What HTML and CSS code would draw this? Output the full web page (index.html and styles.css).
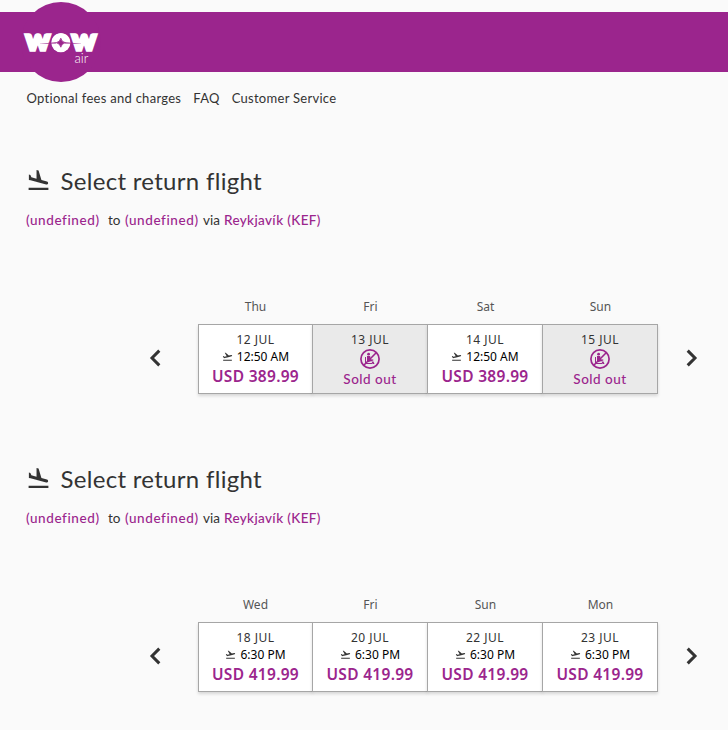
FILE: index.html
```html
<!DOCTYPE html>
<html lang="en">
<head>
<meta charset="utf-8">
<title>WOW air</title>
<link rel="stylesheet" href="styles.css">
</head>
<body>
<svg width="0" height="0" class="defs">
  <symbol id="landing" viewBox="0 0 24 24"><path d="M2.5 19h19v2h-19zM9.68 13.27l4.35 1.16 5.31 1.42c.8.21 1.62-.26 1.84-1.06.21-.8-.26-1.62-1.06-1.84l-5.31-1.42-2.76-9.02L10.12 2v8.28L5.15 8.95l-.93-2.32-1.45-.39v5.17l1.6.43 5.31 1.43z"/></symbol>
  <symbol id="takeoff" viewBox="0 0 24 24"><path d="M2.5 19h19v2h-19zM22.07 9.64c-.21-.8-1.04-1.28-1.84-1.06L14.92 10l-6.9-6.43-1.93.51 4.14 7.17-4.97 1.33-1.97-1.54-1.45.39 1.82 3.16.77 1.33 1.6-.43 5.31-1.42 4.35-1.16L21 11.49c.81-.23 1.28-1.05 1.07-1.85z"/></symbol>
  <symbol id="soldout" viewBox="0 0 20 20"><g fill="none" stroke="currentColor"><circle cx="10" cy="10" r="9.100" stroke-width="1.700"/><path d="M16.2 3.8 3.8 16.2" stroke-width="1.6"/></g><circle cx="8.6" cy="5.2" r="1.4"/><path d="M7 7h3.2l.3 3.2 2.800.300v1L8 13.200 7 12zM5 8h1v6h6v1H5zM11.500 12.500h2l1 2.500h-2z"/></symbol>
  <symbol id="prev" viewBox="0 0 12 18"><path d="M10.300 1.600 3 9l7.300 7.400" fill="none" stroke="currentColor" stroke-width="3"/></symbol>
  <symbol id="next" viewBox="0 0 12 18"><path d="M1.700 1.600 9 9l-7.300 7.400" fill="none" stroke="currentColor" stroke-width="3"/></symbol>
</svg>
<header class="bar">
  <svg class="logo" viewBox="0 0 80 80" width="80" height="80">
    <circle cx="40" cy="40" r="40" fill="#9b258d"/>
    <text class="wow" x="5" y="48.200" textLength="23.500" lengthAdjust="spacingAndGlyphs">W</text>
    <text class="wow" x="32" y="48.200" textLength="16" lengthAdjust="spacingAndGlyphs">O</text>
    <text class="wow" x="51.300" y="48.200" textLength="23.500" lengthAdjust="spacingAndGlyphs">W</text>
    <circle cx="39.800" cy="40.700" r="9.500" fill="#fff"/>
    <path d="M39.800 36.200Q40.600 39.900 44.300 40.700 40.600 41.500 39.800 45.200 39 41.500 35.300 40.700 39 39.900 39.800 36.200z" fill="#9b258d" stroke="#9b258d" stroke-width=".8"/>
    <path d="M17 41.800 35 40.300v1.200zM44 40.300l18.500 1.500-18.500-.3z" fill="#9b258d"/>
    <text class="air" x="53.500" y="61">air</text>
  </svg>
</header>
<nav class="links"><a>Optional fees and charges</a><a>FAQ</a><a>Customer Service</a></nav>
<section class="flight">
  <h2><svg class="land"><use href="#landing"/></svg><span>Select return flight</span></h2>
  <p class="route"><b>(undefined)</b><span class="to">to</span><b>(undefined)</b><span class="via">via</span><b class="city">Reykjavík (KEF)</b></p>
  <div class="picker">
    <svg class="arrow"><use href="#prev"/></svg>
    <div class="days">
      <div class="day"><div class="name">Thu</div><div class="card"><span class="date">12 JUL</span><span class="time"><svg><use href="#takeoff"/></svg>12:50 AM</span><span class="price">USD 389.99</span></div></div>
      <div class="day"><div class="name">Fri</div><div class="card sold"><span class="date">13 JUL</span><svg class="no"><use href="#soldout"/></svg><span class="out">Sold out</span></div></div>
      <div class="day"><div class="name">Sat</div><div class="card"><span class="date">14 JUL</span><span class="time"><svg><use href="#takeoff"/></svg>12:50 AM</span><span class="price">USD 389.99</span></div></div>
      <div class="day"><div class="name">Sun</div><div class="card sold"><span class="date">15 JUL</span><svg class="no"><use href="#soldout"/></svg><span class="out">Sold out</span></div></div>
    </div>
    <svg class="arrow"><use href="#next"/></svg>
  </div>
</section>
<section class="flight">
  <h2><svg class="land"><use href="#landing"/></svg><span>Select return flight</span></h2>
  <p class="route"><b>(undefined)</b><span class="to">to</span><b>(undefined)</b><span class="via">via</span><b class="city">Reykjavík (KEF)</b></p>
  <div class="picker">
    <svg class="arrow"><use href="#prev"/></svg>
    <div class="days">
      <div class="day"><div class="name">Wed</div><div class="card"><span class="date">18 JUL</span><span class="time"><svg><use href="#takeoff"/></svg>6:30 PM</span><span class="price">USD 419.99</span></div></div>
      <div class="day"><div class="name">Fri</div><div class="card"><span class="date">20 JUL</span><span class="time"><svg><use href="#takeoff"/></svg>6:30 PM</span><span class="price">USD 419.99</span></div></div>
      <div class="day"><div class="name">Sun</div><div class="card"><span class="date">22 JUL</span><span class="time"><svg><use href="#takeoff"/></svg>6:30 PM</span><span class="price">USD 419.99</span></div></div>
      <div class="day"><div class="name">Mon</div><div class="card"><span class="date">23 JUL</span><span class="time"><svg><use href="#takeoff"/></svg>6:30 PM</span><span class="price">USD 419.99</span></div></div>
    </div>
    <svg class="arrow"><use href="#next"/></svg>
  </div>
</section>
</body>
</html>
```
FILE: styles.css
```css
* { box-sizing: border-box; }
html { overflow: hidden; }
body { margin: 0; padding-top: 12px; height: 730px; background: #fafafa; color: #333; font-family: Lato, "Open Sans", sans-serif; overflow: hidden; }
.defs { position: absolute; }
.bar { height: 60px; background: #9b258d; padding-left: 21px; }
.logo { display: block; position: relative; top: -10px; }
.wow { font: 900 20px Lato, sans-serif; fill: #fff; stroke: #fff; stroke-width: 3.400px; }
.air { font: 300 13px Lato, sans-serif; fill: #fff; }
.links { display: flex; gap: 12px; height: 54px; padding: 16px 0 0 26.500px; font-size: 13px; line-height: 20px; letter-spacing: .28px; white-space: nowrap; }
.flight { height: 298px; padding-top: 38px; }
h2 { display: flex; align-items: center; margin: 0; height: 32px; padding-left: 26px; font-size: 24px; font-weight: 400; letter-spacing: .3px; white-space: nowrap; }
.land { width: 25px; height: 25px; margin-right: 9.500px; fill: #333; }
.route { display: flex; margin: 14px 0 0; padding-left: 26px; height: 20px; font-size: 13.500px; line-height: 20px; white-space: nowrap; }
.route b { color: #9b258d; width: 74px; font-weight: 500; letter-spacing: .600px; }
.route .to { margin: 0 5px 0 8px; width: 12px; }
.route .via { margin: 0 4px; width: 17px; }
.route .city { width: auto; letter-spacing: .35px; }
.picker { display: flex; align-items: flex-start; padding: 66px 30px 0 149px; }
.arrow { width: 12px; height: 18px; margin-top: 53px; color: #333; }
.days { display: flex; width: 460px; margin: 0 27.500px 0 37px; }
.arrow:first-child { margin-left: -.500px; margin-right: .500px; }
.day { width: 115px; text-align: center; font-family: "Noto Sans", sans-serif; }
.name { height: 28px; font-size: 12px; line-height: 22px; color: #555; }
.card { display: flex; flex-direction: column; align-items: center; height: 70px; margin-left: -1px; padding-top: 6px; background: #fff; border: 1px solid #a6a6a6; box-shadow: 0 2px 3px rgba(0,0,0,.14); white-space: nowrap; }
.day:first-child .card { margin-left: 0; }
.sold { background: #eaeaea; }
.date { height: 18px; font-size: 12px; line-height: 18px; letter-spacing: .500px; }
.time { display: flex; align-items: center; gap: 4px; height: 16px; font-size: 12px; line-height: 16px; letter-spacing: 0; color: #000; }
.time svg { width: 11px; height: 11px; fill: #333; position: relative; top: -1px; }
.price { height: 22px; font-size: 15.500px; line-height: 22px; font-weight: 600; letter-spacing: .300px; color: #9b258d; }
.no { width: 20px; height: 20px; color: #9b258d; fill: #9b258d; }
.out { font-family: Lato, sans-serif; font-size: 13.500px; line-height: 21px; font-weight: 500; letter-spacing: .5px; color: #9b258d; }
```
